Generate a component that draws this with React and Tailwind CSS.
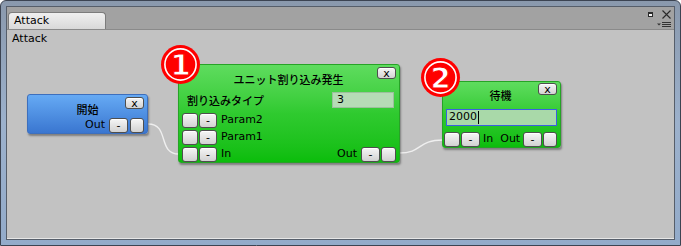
import React from 'react';

const latin = "font-['DejaVu_Sans','Noto_Sans_CJK_JP',sans-serif]";
const jp = "font-['Noto_Sans_CJK_JP',sans-serif] text-[11px] font-medium";

function Btn({ label = '', w = 'w-[18px]', h = 'h-[15px]' }) {
  return (
    <div
      className={`${w} ${h} shrink-0 flex items-center justify-center rounded-[3px] border border-[#4e4e4e] bg-gradient-to-b from-[#f6f6f6] to-[#d2d2d2] text-[11px] leading-none text-black shadow-[inset_0_1px_0_#ffffff]`}
    >
      {label}
    </div>
  );
}

function CloseBtn() {
  return <Btn label="x" w="w-[19px]" h="h-[12px]" />;
}

function Circled({ n }) {
  return (
    <svg width="41" height="41" viewBox="0 0 41 41">
      <circle cx="20.5" cy="20.5" r="19.5" fill="#ff0000" />
      <circle cx="20.5" cy="20.5" r="15.6" fill="none" stroke="#ffffff" strokeWidth="1.6" />
      <text
        x="20.5"
        y="31"
        textAnchor="middle"
        fontFamily="DejaVu Sans, sans-serif"
        fontWeight="bold"
        fontSize="29"
        fill="#ffffff"
        stroke="#ff0000"
        strokeWidth="1"
      >
        {n}
      </text>
    </svg>
  );
}

export default function App() {
  return (
    <div className={`${latin} w-[681px] h-[246px] rounded-t-[6px] border border-[#3c4452] bg-gradient-to-b from-[#8a99ad] via-[#9cb1cc] to-[#93abca] px-[5px] pt-[5px] pb-[5px] text-[11px] text-black`}>
      <div className="flex h-full flex-col border border-[#565e6a] bg-[#c2c2c2]">
        {/* header with tab */}
        <div className="flex h-[23px] shrink-0 items-end justify-between border-b border-[#8a8a8a] bg-[#a2a2a2] pl-[1px] pr-[3px]">
          <div className="flex h-[17px] w-[98px] items-center rounded-t-[4px] border border-b-0 border-[#7c7c7c] bg-gradient-to-b from-[#f0f0f0] to-[#d9d9d9] pl-[5px] text-[11px]">
            Attack
          </div>
          <div className="flex h-full flex-col items-end justify-start pt-[3px]">
            <div className="flex items-center gap-[9px]">
              <div className="h-[5px] w-[5px] border border-[#2a2a2a] border-t-[2px] bg-[#f4f4f4]" />
              <svg width="9" height="9" viewBox="0 0 9 9">
                <path d="M0.5 0.5 L8.5 8.5 M8.5 0.5 L0.5 8.5" stroke="#2a2a2a" strokeWidth="1.1" />
              </svg>
            </div>
            <svg className="mt-[3px]" width="14" height="6" viewBox="0 0 14 6">
              <path d="M0 1.5 H4 L2 3.5 Z" fill="#333" />
              <path d="M5 0.5 H14 M5 2.5 H14 M5 4.5 H14" stroke="#333" strokeWidth="1" />
            </svg>
          </div>
        </div>

        {/* canvas */}
        <div className="relative flex-1 border-b border-[#e6e6e6]">
          <div className="pl-[5px] pt-[1px] text-[11px]">Attack</div>

          <svg className="absolute left-0 top-0" width="668" height="209">
            <path d="M141 94 C163 94 150 124 172 124" fill="none" stroke="#efefef" strokeWidth="1.4" />
            <path d="M392 123 C416 123 410 110 436 110" fill="none" stroke="#efefef" strokeWidth="1.4" />
          </svg>

          {/* 開始 */}
          <div className="absolute left-[20px] top-[64px] flex h-[40px] w-[121px] flex-col rounded-[3px] border border-[#3d6fbd] bg-gradient-to-b from-[#66aaf4] to-[#3a76d0] px-[3px] pt-[2px] shadow-[1px_2px_2px_rgba(0,0,0,0.35)]">
            <div className="grid h-[21px] grid-cols-[1fr_auto_1fr] items-start">
              <div />
              <div className={`mt-[6px] leading-[13px] ${jp}`}>開始</div>
              <div className="flex justify-end">
                <CloseBtn />
              </div>
            </div>
            <div className="flex h-[15px] items-center justify-end gap-[2px]">
              <span className="mr-[2px]">Out</span>
              <Btn label="-" w="w-[19px]" />
              <Btn w="w-[14px]" />
            </div>
          </div>

          {/* ユニット割り込み発生 */}
          <div className="absolute left-[171px] top-[34px] flex h-[99px] w-[222px] flex-col rounded-[3px] border border-[#26a326] bg-gradient-to-b from-[#5edc5e] via-[#2fca2f] to-[#0abd0a] px-[2px] pt-[2px] shadow-[1px_2px_2px_rgba(0,0,0,0.35)]">
            <div className="grid h-[27px] grid-cols-[1fr_auto_1fr] items-start pr-[1px]">
              <div />
              <div className={`mt-[5px] leading-[14px] ${jp}`}>ユニット割り込み発生</div>
              <div className="flex justify-end">
                <CloseBtn />
              </div>
            </div>
            <div className="flex h-[16px] items-center justify-between pl-[6px] pr-[3px]">
              <span className={jp}>割り込みタイプ</span>
              <div className="flex h-[16px] w-[62px] items-center border border-[#9cbf9c] bg-[#b6dbb6] pl-[4px] text-[11px]">3</div>
            </div>
            <div className="mt-[5px] flex flex-col gap-[2px] pl-[1px] pr-[1px]">
              <div className="flex h-[15px] items-center gap-[1px]">
                <Btn w="w-[16px]" />
                <Btn label="-" />
                <span className="ml-[3px]">Param2</span>
              </div>
              <div className="flex h-[15px] items-center gap-[1px]">
                <Btn w="w-[16px]" />
                <Btn label="-" />
                <span className="ml-[3px]">Param1</span>
              </div>
              <div className="flex h-[15px] items-center gap-[1px]">
                <Btn w="w-[16px]" />
                <Btn label="-" />
                <span className="ml-[3px]">In</span>
                <span className="ml-auto mr-[3px]">Out</span>
                <Btn label="-" w="w-[19px]" />
                <Btn w="w-[15px]" />
              </div>
            </div>
          </div>

          {/* 待機 */}
          <div className="absolute left-[435px] top-[51px] flex h-[67px] w-[119px] flex-col rounded-[3px] border border-[#26a326] bg-gradient-to-b from-[#5edc5e] via-[#2fca2f] to-[#0abd0a] px-[1px] pt-[1px] shadow-[1px_2px_2px_rgba(0,0,0,0.35)]">
            <div className="grid h-[26px] grid-cols-[1fr_auto_1fr] items-start pr-[2px]">
              <div />
              <div className={`mt-[5px] leading-[14px] ${jp}`}>待機</div>
              <div className="flex justify-end">
                <CloseBtn />
              </div>
            </div>
            <div className="px-[2px]">
              <div className="flex h-[17px] w-full items-center border border-[#3b5fe0] bg-[#a9d9a9] pl-[2px] text-[11px]">
                2000
                <span className="ml-[1px] h-[13px] w-[1px] bg-black" />
              </div>
            </div>
            <div className="mt-[6px] flex h-[15px] items-center gap-[1px] pr-[2px]">
              <Btn w="w-[16px]" />
              <Btn label="-" w="w-[19px]" />
              <span className="ml-[2px]">In</span>
              <span className="ml-[6px]">Out</span>
              <span className="ml-auto" />
              <Btn label="-" w="w-[19px]" />
              <Btn w="w-[14px]" />
            </div>
          </div>

          <div className="absolute left-[153px] top-[14px]">
            <Circled n="1" />
          </div>
          <div className="absolute left-[413px] top-[27px]">
            <Circled n="2" />
          </div>
        </div>
      </div>
    </div>
  );
}
